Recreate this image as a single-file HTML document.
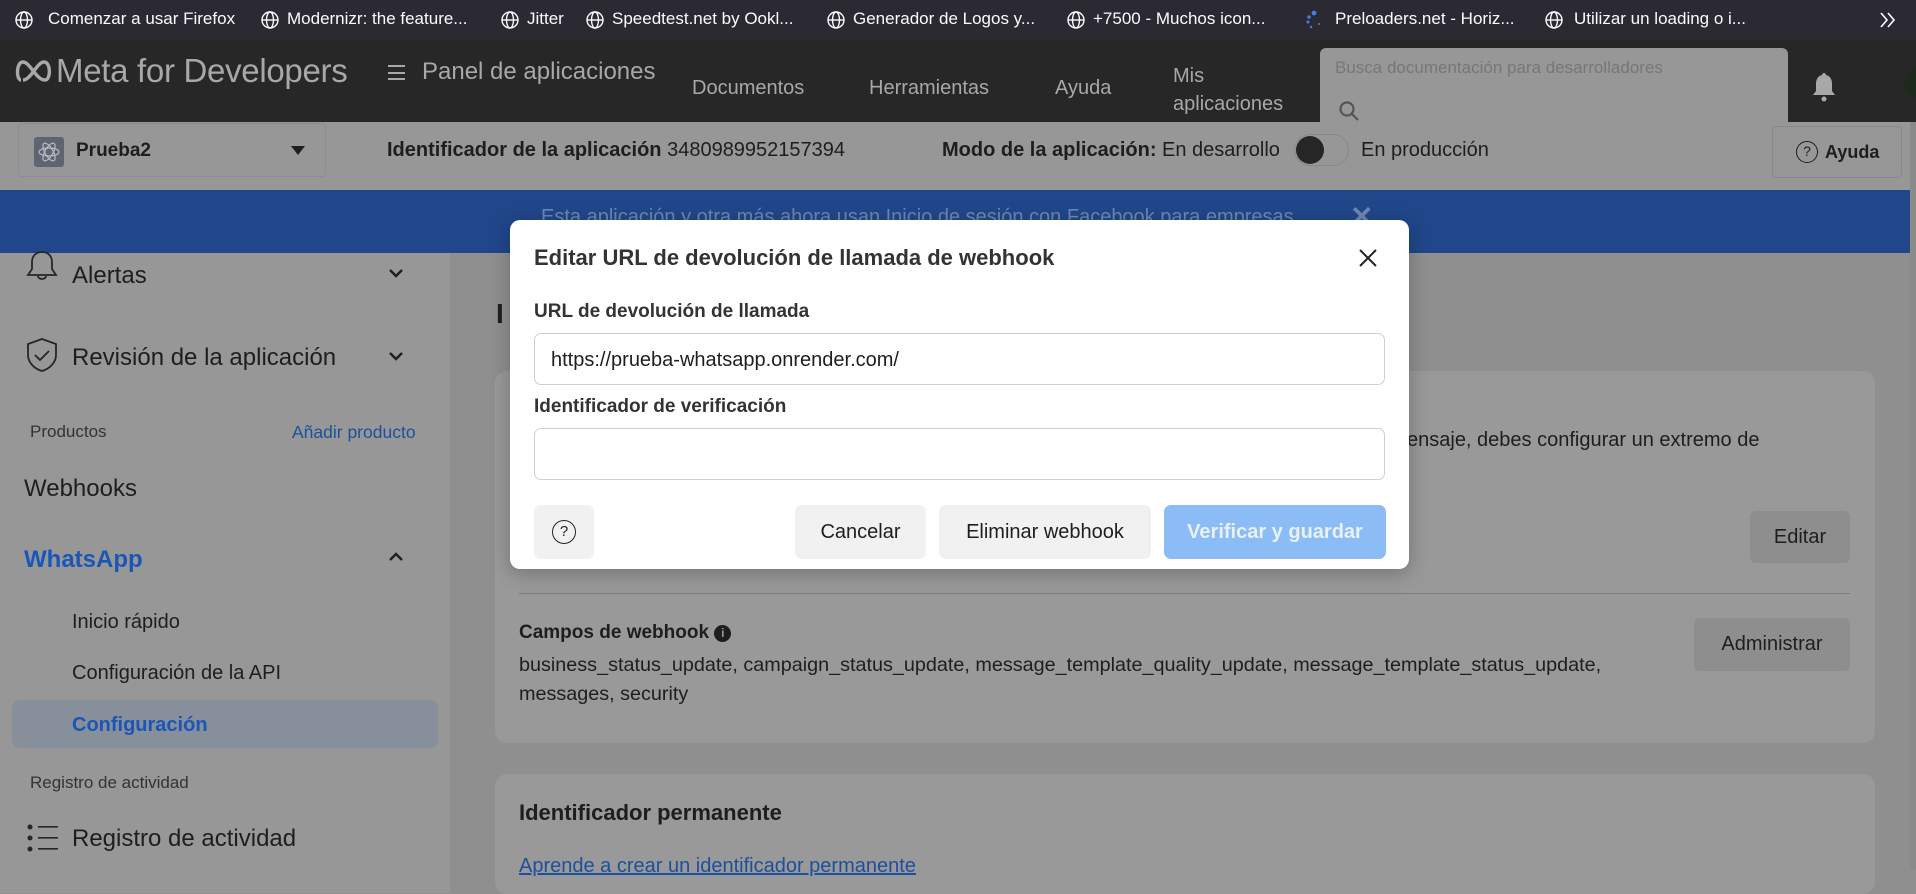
<!DOCTYPE html>
<html style="background:#8f8f8f"><head><meta charset="utf-8"><style>
*{margin:0;padding:0;box-sizing:border-box}
body{width:1916px;height:870px;overflow:hidden;position:relative;font-family:"Liberation Sans",sans-serif;background:#8f8f8f;color:#1e1e1e}
.a{position:absolute;white-space:nowrap}
.bm{color:#fbfbfe;font-size:17px;top:9px}
.g{position:absolute;top:10px;width:20px;height:20px}
</style></head><body>
<!-- bookmark bar -->
<div class="a" style="left:0;top:0;width:1916px;height:40px;background:#2b2a33"></div>
<svg class="g" style="left:14px" viewBox="0 0 20 20" fill="none" stroke="#fbfbfe" stroke-width="1.4"><circle cx="10" cy="10" r="8"/><ellipse cx="10" cy="10" rx="3.5" ry="8"/><path d="M2 10h16"/></svg>
<div class="a bm" style="left:48px">Comenzar a usar Firefox</div>
<svg class="g" style="left:260px" viewBox="0 0 20 20" fill="none" stroke="#fbfbfe" stroke-width="1.4"><circle cx="10" cy="10" r="8"/><ellipse cx="10" cy="10" rx="3.5" ry="8"/><path d="M2 10h16"/></svg>
<div class="a bm" style="left:287px">Modernizr: the feature...</div>
<svg class="g" style="left:500px" viewBox="0 0 20 20" fill="none" stroke="#fbfbfe" stroke-width="1.4"><circle cx="10" cy="10" r="8"/><ellipse cx="10" cy="10" rx="3.5" ry="8"/><path d="M2 10h16"/></svg>
<div class="a bm" style="left:527px">Jitter</div>
<svg class="g" style="left:585px" viewBox="0 0 20 20" fill="none" stroke="#fbfbfe" stroke-width="1.4"><circle cx="10" cy="10" r="8"/><ellipse cx="10" cy="10" rx="3.5" ry="8"/><path d="M2 10h16"/></svg>
<div class="a bm" style="left:612px">Speedtest.net by Ookl...</div>
<svg class="g" style="left:826px" viewBox="0 0 20 20" fill="none" stroke="#fbfbfe" stroke-width="1.4"><circle cx="10" cy="10" r="8"/><ellipse cx="10" cy="10" rx="3.5" ry="8"/><path d="M2 10h16"/></svg>
<div class="a bm" style="left:853px">Generador de Logos y...</div>
<svg class="g" style="left:1066px" viewBox="0 0 20 20" fill="none" stroke="#fbfbfe" stroke-width="1.4"><circle cx="10" cy="10" r="8"/><ellipse cx="10" cy="10" rx="3.5" ry="8"/><path d="M2 10h16"/></svg>
<div class="a bm" style="left:1093px">+7500 - Muchos icon...</div>
<svg class="g" style="left:1304px" viewBox="0 0 20 20" fill="#3b82e6"><circle cx="10" cy="3" r="2.4"/><circle cx="5" cy="7" r="1.8"/><circle cx="4" cy="12" r="1.5"/><circle cx="7" cy="17" r="1.2"/><circle cx="15" cy="14" r="1"/></svg>
<div class="a bm" style="left:1335px">Preloaders.net - Horiz...</div>
<svg class="g" style="left:1544px" viewBox="0 0 20 20" fill="none" stroke="#fbfbfe" stroke-width="1.4"><circle cx="10" cy="10" r="8"/><ellipse cx="10" cy="10" rx="3.5" ry="8"/><path d="M2 10h16"/></svg>
<div class="a bm" style="left:1574px">Utilizar un loading o i...</div>
<svg class="a" style="left:1878px;top:11px" width="20" height="18" viewBox="0 0 20 18" fill="none" stroke="#fbfbfe" stroke-width="1.6"><path d="M3 2l6 7-6 7M10 2l6 7-6 7"/></svg>

<!-- meta header -->
<div class="a" style="left:0;top:40px;width:1916px;height:82px;background:#272727"></div>
<svg class="a" style="left:15px;top:60px" width="38" height="22" viewBox="0 0 38 22" fill="none" stroke="#a8a8a8" stroke-width="3.4"><path d="M6 20C1 20 1 2 8 2c7 0 13 18 22 18 6 0 6-18-1-18-7 0-13 18-21 18"/></svg>
<div class="a" style="left:56px;top:52px;font-size:33px;color:#a8a8a8;letter-spacing:-0.3px">Meta for Developers</div>
<div class="a" style="left:388px;top:65px;width:17px;height:15px;border-top:2px solid #a8a8a8;border-bottom:2px solid #a8a8a8"><div style="margin-top:4.5px;height:2px;background:#a8a8a8"></div></div>
<div class="a" style="left:422px;top:58px;font-size:24px;color:#a8a8a8">Panel de aplicaciones</div>
<div class="a" style="left:692px;top:77px;font-size:20px;color:#a8a8a8">Documentos</div>
<div class="a" style="left:869px;top:77px;font-size:20px;color:#a8a8a8">Herramientas</div>
<div class="a" style="left:1055px;top:77px;font-size:20px;color:#a8a8a8">Ayuda</div>
<div class="a" style="left:1173px;top:62px;font-size:20px;color:#a8a8a8;line-height:28px">Mis<br>aplicaciones</div>
<svg class="a" style="left:1812px;top:72px" width="24" height="30" viewBox="0 0 24 30" fill="#a8a8a8"><path d="M12 1c-1 0-2 1-2 2-4 1-6 4-6 9v7l-3 4h22l-3-4v-7c0-5-2-8-6-9 0-1-1-2-2-2z"/><circle cx="12" cy="27" r="2.5"/></svg>
<div class="a" style="left:1904px;top:68px;width:30px;height:30px;border-radius:50%;background:#1b2a1b"></div>

<!-- app bar -->
<div class="a" style="left:0;top:122px;width:1916px;height:68px;background:#979797"></div>
<div class="a" style="left:1320px;top:48px;width:468px;height:88px;background:#979797;border-radius:6px 6px 0 0"></div>
<div class="a" style="left:1335px;top:58px;font-size:17px;color:#777">Busca documentación para desarrolladores</div>
<svg class="a" style="left:1338px;top:100px" width="22" height="22" viewBox="0 0 22 22" fill="none" stroke="#555" stroke-width="2.2"><circle cx="9" cy="9" r="6.5"/><path d="M14 14l6 6"/></svg>
<div class="a" style="left:18px;top:123px;width:308px;height:54px;border:1px solid #8c8c8c;border-radius:4px"></div>
<div class="a" style="left:34px;top:137px;width:30px;height:30px;background:#606470;border-radius:3px"></div>
<svg class="a" style="left:36px;top:139px" width="26" height="26" viewBox="0 0 26 26" fill="none" stroke="#b8bcc6" stroke-width="1.2"><ellipse cx="13" cy="13" rx="10" ry="4"/><ellipse cx="13" cy="13" rx="10" ry="4" transform="rotate(60 13 13)"/><ellipse cx="13" cy="13" rx="10" ry="4" transform="rotate(-60 13 13)"/></svg>
<div class="a" style="left:76px;top:140px;font-size:19px;font-weight:bold;color:#1e1e1e">Prueba2</div>
<div class="a" style="left:291px;top:146px;width:0;height:0;border-left:7px solid transparent;border-right:7px solid transparent;border-top:9px solid #1e1e1e"></div>
<div class="a" style="left:387px;top:139px;font-size:20px;color:#1e1e1e"><b>Identificador de la aplicación</b> 3480989952157394</div>
<div class="a" style="left:942px;top:139px;font-size:20px;color:#1e1e1e"><b>Modo de la aplicación:</b> En desarrollo</div>
<div class="a" style="left:1294px;top:134px;width:55px;height:32px;border-radius:16px;border:1px solid #888;background:#979797"></div>
<div class="a" style="left:1296px;top:136px;width:28px;height:28px;border-radius:50%;background:#262626"></div>
<div class="a" style="left:1361px;top:139px;font-size:20px;color:#1e1e1e">En producción</div>
<div class="a" style="left:1772px;top:126px;width:130px;height:52px;border:1px solid #888;border-radius:4px"></div>
<div class="a" style="left:1796px;top:141px;width:22px;height:22px;border:1.6px solid #1e1e1e;border-radius:50%;font-size:14px;text-align:center;line-height:19px">?</div>
<div class="a" style="left:1825px;top:142px;font-size:18px;font-weight:bold">Ayuda</div>

<!-- banner -->
<div class="a" style="left:0;top:190px;width:1910px;height:63px;background:#21478a"></div>
<div class="a" style="left:541px;top:206px;font-size:20px;color:#6e86b4">Esta aplicación y otra más ahora usan Inicio de sesión con Facebook para empresas.</div>
<div class="a" style="left:1350px;top:200px;font-size:28px;color:#6e86b4;font-weight:bold">✕</div>
<div class="a" style="left:1910px;top:122px;width:6px;height:748px;background:#8a8a8a"></div>

<!-- sidebar -->
<div class="a" style="left:0;top:253px;width:450px;height:640px;background:#979797"></div>
<svg class="a" style="left:25px;top:250px" width="34" height="32" viewBox="0 0 34 32" fill="none" stroke="#262626" stroke-width="1.8"><path d="M17 2c-6 0-10 4-10 10v7l-4 6h28l-4-6v-7c0-6-4-10-10-10zM13 26a4 3 0 008 0"/></svg>
<div class="a" style="left:72px;top:262px;font-size:24px">Alertas</div>
<svg class="a" style="left:388px;top:268px" width="16" height="10" viewBox="0 0 16 10" fill="none" stroke="#1e1e1e" stroke-width="2.4"><path d="M2 2l6 6 6-6"/></svg>
<svg class="a" style="left:25px;top:337px" width="34" height="36" viewBox="0 0 34 36" fill="none" stroke="#262626" stroke-width="1.8"><path d="M17 2L3 7v11c0 8 7 14 14 16 7-2 14-8 14-16V7zM10 18l5 5 9-9"/></svg>
<div class="a" style="left:72px;top:344px;font-size:24px">Revisión de la aplicación</div>
<svg class="a" style="left:388px;top:351px" width="16" height="10" viewBox="0 0 16 10" fill="none" stroke="#1e1e1e" stroke-width="2.4"><path d="M2 2l6 6 6-6"/></svg>
<div class="a" style="left:30px;top:422px;font-size:17px;color:#333">Productos</div>
<div class="a" style="left:292px;top:422px;font-size:17.5px;color:#1d4f9e">Añadir producto</div>
<div class="a" style="left:24px;top:475px;font-size:24px">Webhooks</div>
<div class="a" style="left:24px;top:546px;font-size:24px;font-weight:bold;color:#1a56b8">WhatsApp</div>
<svg class="a" style="left:388px;top:552px" width="16" height="10" viewBox="0 0 16 10" fill="none" stroke="#1e1e1e" stroke-width="2.4"><path d="M2 8l6-6 6 6"/></svg>
<div class="a" style="left:72px;top:611px;font-size:20px">Inicio rápido</div>
<div class="a" style="left:72px;top:662px;font-size:20px">Configuración de la API</div>
<div class="a" style="left:12px;top:700px;width:426px;height:48px;background:#878f9a;border-radius:8px"></div>
<div class="a" style="left:72px;top:714px;font-size:20px;font-weight:bold;color:#1a56b8">Configuración</div>
<div class="a" style="left:30px;top:773px;font-size:17px;color:#333">Registro de actividad</div>
<svg class="a" style="left:27px;top:824px" width="32" height="28" viewBox="0 0 32 28" fill="#262626"><circle cx="3" cy="3" r="2.5"/><circle cx="3" cy="14" r="2.5"/><circle cx="3" cy="25" r="2.5"/><rect x="11" y="2" width="20" height="1.6"/><rect x="11" y="13" width="20" height="1.6"/><rect x="11" y="24" width="20" height="1.6"/></svg>
<div class="a" style="left:72px;top:825px;font-size:24px">Registro de actividad</div>

<!-- main -->
<div class="a" style="left:496px;top:298px;font-size:28px;font-weight:bold">I</div>
<div class="a" style="left:495px;top:371px;width:1380px;height:372px;background:#999;border-radius:12px"></div>
<div class="a" style="left:1407px;top:429px;font-size:20px">ensaje, debes configurar un extremo de</div>
<div class="a" style="left:1750px;top:511px;width:100px;height:52px;background:#8e8e8e;border-radius:6px;font-size:20px;text-align:center;line-height:52px">Editar</div>
<div class="a" style="left:519px;top:593px;width:1331px;height:1px;background:#7c7c7c"></div>
<div class="a" style="left:519px;top:622px;font-size:19px;font-weight:bold">Campos de webhook <span style="display:inline-block;width:17px;height:17px;border-radius:50%;background:#1e1e1e;color:#999;font-size:12px;text-align:center;line-height:17px;vertical-align:1px">i</span></div>
<div class="a" style="left:519px;top:654px;font-size:19.8px">business_status_update, campaign_status_update, message_template_quality_update, message_template_status_update,</div>
<div class="a" style="left:519px;top:683px;font-size:19.8px">messages, security</div>
<div class="a" style="left:1694px;top:618px;width:156px;height:53px;background:#8e8e8e;border-radius:6px;font-size:20px;text-align:center;line-height:53px">Administrar</div>
<div class="a" style="left:495px;top:774px;width:1380px;height:120px;background:#999;border-radius:12px"></div>
<div class="a" style="left:519px;top:800px;font-size:22px;font-weight:bold">Identificador permanente</div>
<div class="a" style="left:519px;top:855px;font-size:20px;color:#1d4f9e;text-decoration:underline">Aprende a crear un identificador permanente</div>

<!-- modal -->
<div class="a" style="left:510px;top:220px;width:899px;height:349px;background:#fff;border-radius:10px;box-shadow:0 4px 20px rgba(0,0,0,.25)"></div>
<div class="a" style="left:534px;top:245px;font-size:22px;font-weight:bold;color:#333">Editar URL de devolución de llamada de webhook</div>
<svg class="a" style="left:1358px;top:248px" width="20" height="20" viewBox="0 0 20 20" fill="none" stroke="#222" stroke-width="2"><path d="M2 2l16 16M18 2L2 18"/></svg>
<div class="a" style="left:534px;top:301px;font-size:19px;font-weight:bold;color:#333">URL de devolución de llamada</div>
<div class="a" style="left:534px;top:333px;width:851px;height:52px;border:1px solid #ccd0d5;border-radius:7px"></div>
<div class="a" style="left:551px;top:349px;font-size:20px;color:#1c1e21">https://prueba-whatsapp.onrender.com/</div>
<div class="a" style="left:534px;top:396px;font-size:19px;font-weight:bold;color:#333">Identificador de verificación</div>
<div class="a" style="left:534px;top:428px;width:851px;height:52px;border:1px solid #ccd0d5;border-radius:7px"></div>
<div class="a" style="left:534px;top:505px;width:60px;height:54px;background:#f1f1f1;border-radius:7px"></div>
<div class="a" style="left:552px;top:520px;width:24px;height:24px;border:1.6px solid #222;border-radius:50%;font-size:15px;text-align:center;line-height:21px;color:#222">?</div>
<div class="a" style="left:795px;top:505px;width:131px;height:54px;background:#f1f1f1;border-radius:7px;font-size:20px;text-align:center;line-height:54px;color:#1c1e21">Cancelar</div>
<div class="a" style="left:939px;top:505px;width:212px;height:54px;background:#f1f1f1;border-radius:7px;font-size:20px;text-align:center;line-height:54px;color:#1c1e21">Eliminar webhook</div>
<div class="a" style="left:1164px;top:505px;width:222px;height:54px;background:#8cbcf6;border-radius:7px;font-size:20px;font-weight:bold;text-align:center;line-height:54px;color:#e8f1fd">Verificar y guardar</div>
</body></html>
